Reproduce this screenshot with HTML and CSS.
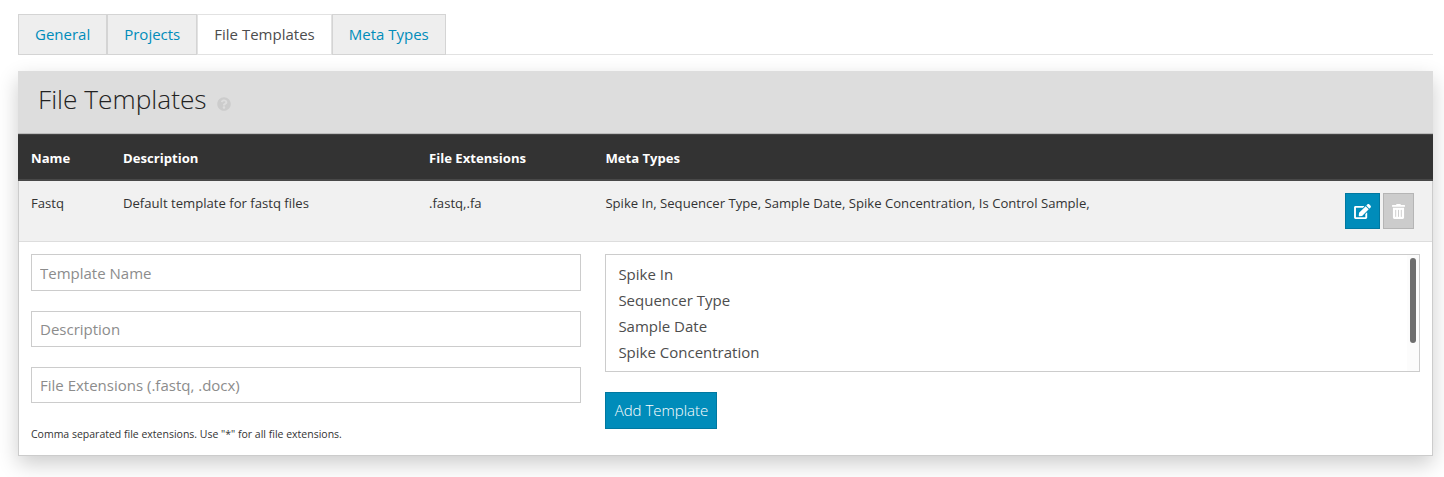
FILE: index.html
```html
<!DOCTYPE html>
<html lang="en">
<head>
<meta charset="utf-8">
<title>File Templates</title>
<link rel="stylesheet" href="styles.css">
</head>
<body>
<nav class="tabs">
  <a class="tab">General</a>
  <a class="tab">Projects</a>
  <a class="tab tab-active">File Templates</a>
  <a class="tab">Meta Types</a>
</nav>
<section class="panel">
  <header class="panel-header">
    <h1 class="title">File Templates</h1>
    <svg class="help" viewBox="0 0 512 512"><path d="M504 256c0 136.997-111.043 248-248 248S8 392.997 8 256C8 119.083 119.043 8 256 8s248 111.083 248 248zM262.655 90c-54.497 0-89.255 22.957-116.549 63.758-3.536 5.286-2.353 12.415 2.715 16.258l34.699 26.31c5.205 3.947 12.621 3.008 16.665-2.122 17.864-22.658 30.113-35.797 57.303-35.797 20.429 0 45.698 13.148 45.698 32.958 0 14.976-12.363 22.667-32.534 33.976C247.128 238.528 216 254.941 216 296v4c0 6.627 5.373 12 12 12h56c6.627 0 12-5.373 12-12v-1.333c0-28.462 83.186-29.647 83.186-106.667 0-58.002-60.165-102-116.531-102zM256 338c-25.365 0-46 20.635-46 46 0 25.364 20.635 46 46 46s46-20.636 46-46c0-25.364-20.635-46-46-46z"/></svg>
  </header>
  <div class="row row-head">
    <div>Name</div><div>Description</div><div>File Extensions</div><div>Meta Types</div>
  </div>
  <div class="row row-item">
    <div>Fastq</div>
    <div>Default template for fastq files</div>
    <div>.fastq,.fa</div>
    <div>Spike In, Sequencer Type, Sample Date, Spike Concentration, Is Control Sample,</div>
    <div class="actions">
      <button class="btn btn-edit" aria-label="Edit"><svg class="icon-edit" viewBox="0 0 576 512"><path d="M402.6 83.2l90.2 90.2c3.8 3.8 3.8 10 0 13.8L274.4 405.6l-92.8 10.3c-12.4 1.4-22.9-9.1-21.5-21.5l10.3-92.8L388.8 83.2c3.8-3.8 10-3.8 13.8 0zm162-22.9l-48.8-48.8c-15.2-15.2-39.9-15.2-55.2 0l-35.4 35.4c-3.8 3.8-3.8 10 0 13.8l90.2 90.2c3.8 3.8 10 3.8 13.8 0l35.4-35.4c15.2-15.3 15.2-40 0-55.2zM384 346.2V448H64V128h229.8c3.2 0 6.2-1.3 8.5-3.5l40-40c7.6-7.6 2.2-20.5-8.5-20.5H48C21.5 64 0 85.5 0 112v352c0 26.5 21.5 48 48 48h352c26.5 0 48-21.5 48-48V306.2c0-10.7-12.9-16-20.5-8.5l-40 40c-2.2 2.3-3.5 5.3-3.5 8.5z"/></svg></button>
      <button class="btn btn-delete" aria-label="Delete"><svg class="icon-trash" viewBox="0 0 448 512"><path d="M32 464a48 48 0 0 0 48 48h288a48 48 0 0 0 48-48V128H32zm272-256a16 16 0 0 1 32 0v224a16 16 0 0 1-32 0zm-96 0a16 16 0 0 1 32 0v224a16 16 0 0 1-32 0zm-96 0a16 16 0 0 1 32 0v224a16 16 0 0 1-32 0zM432 32H312l-9.4-18.7A24 24 0 0 0 281.1 0H166.8a23.72 23.72 0 0 0-21.4 13.3L136 32H16A16 16 0 0 0 0 48v32a16 16 0 0 0 16 16h416a16 16 0 0 0 16-16V48a16 16 0 0 0-16-16z"/></svg></button>
    </div>
  </div>
  <form class="form">
    <div class="fields">
      <input class="input input-first" type="text" placeholder="Template Name">
      <input class="input" type="text" placeholder="Description">
      <input class="input" type="text" placeholder="File Extensions (.fastq, .docx)">
      <p class="hint">Comma separated file extensions. Use "*" for all file extensions.</p>
    </div>
    <div class="meta">
      <div class="listbox">
        <ul class="options">
          <li>Spike In</li>
          <li>Sequencer Type</li>
          <li>Sample Date</li>
          <li>Spike Concentration</li>
        </ul>
        <div class="track"><div class="thumb"></div></div>
      </div>
      <button class="btn btn-add" type="button">Add Template</button>
    </div>
  </form>
</section>
</body>
</html>
```
FILE: styles.css
```css
* { box-sizing: border-box; }
body {
  margin: 0;
  padding: 14px 11px 0 18px;
  height: 477px;
  overflow: hidden;
  background: #fff;
  color: #333;
  font-family: "Open Sans", sans-serif;
  font-size: 13.125px;
}
.tabs {
  display: flex;
  height: 41px;
  border-bottom: 1px solid #e2e2e2;
}
.tab {
  height: 41px;
  padding: 0 16px;
  border: 1px solid #d4d4d4;
  background: #eee;
  color: #008cba;
  font-size: 15px;
  line-height: 39px;
}
.tab-active {
  background: #fff;
  border-color: #e2e2e2;
  color: #4d4d4d;
}
.panel {
  height: 385px;
  margin-top: 16px;
  background: #fff;
  border: 1px solid #ccc;
  border-top: 0;
  box-shadow: 0 8px 20px rgba(0, 0, 0, .2);
}
.panel-header {
  display: flex;
  height: 63px;
  margin: 0 -1px;
  padding-left: 20px;
  background: #ddd;
  border-bottom: 1px solid #bbb;
}
.title {
  margin: 0;
  color: #222;
  font-size: 26.25px;
  font-weight: 300;
  line-height: 56px;
}
.help {
  width: 14px;
  height: 14px;
  margin: 26px 0 0 10px;
  fill: #ccc;
}
.row {
  display: grid;
  grid-template-columns: 92px 306px 176.4px 739.6px 1fr;
  padding-left: 12px;
}
.row-head {
  height: 47px;
  margin: 0 -1px;
  padding-left: 13px;
  background: #333;
  border-top: 1px solid #444;
  border-bottom: 2px solid #484848;
  color: #fff;
  font-weight: 700;
  line-height: 46px;
}
.row-item {
  height: 61px;
  background: #f1f1f1;
  border-bottom: 1px solid #ddd;
  line-height: 44px;
  white-space: nowrap;
}
.actions {
  display: flex;
  gap: 3px;
  padding-top: 12px;
}
.btn {
  display: flex;
  align-items: center;
  justify-content: center;
  padding: 0;
  border: 1px solid #0078a0;
  background: #008cba;
  color: #fff;
  font-family: inherit;
}
.btn svg { fill: #fff; }
.btn-edit { width: 35px; height: 36px; }
.btn-delete {
  width: 31px;
  height: 36px;
  background: #ccc;
  border-color: #b5b5b5;
}
.icon-edit { width: 17px; height: 15px; margin-top: 1px; }
.icon-trash { width: 13px; height: 15px; margin-top: 1px; }
.form {
  display: grid;
  grid-template-columns: 550px 815px;
  gap: 24px;
  padding: 12px;
}
.fields {
  display: flex;
  flex-direction: column;
  gap: 20px;
}
.input {
  width: 100%;
  height: 36px;
  padding: 0 8px;
  border: 1px solid #ccc;
  background: #fff;
  font: 15px "Open Sans", sans-serif;
}
.input-first { height: 37px; }
.input::placeholder { color: #8c8c8c; }
.hint {
  margin: 3px 0 0;
  color: #333;
  font-size: 10.5px;
  line-height: 16px;
}
.listbox {
  display: flex;
  justify-content: space-between;
  height: 118px;
  border: 1px solid #ccc;
}
.options {
  margin: 0;
  padding: 6px 12.4px;
  list-style: none;
  color: #4d4d4d;
  font-size: 15px;
  line-height: 26px;
}
.track {
  width: 12px;
  padding: 3px;
  background: #fcfcfc;
}
.thumb {
  width: 6px;
  height: 85px;
  border-radius: 3px;
  background: #6e6e6e;
}
.btn-add {
  width: 112px;
  height: 37px;
  margin-top: 20px;
  padding: 0 0 2px 1px;
  font-size: 15px;
  font-weight: 300;
}
```
